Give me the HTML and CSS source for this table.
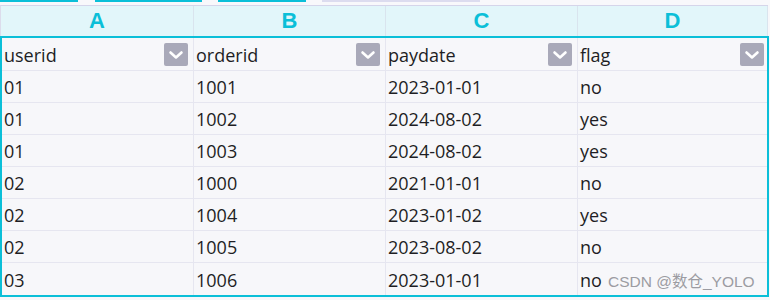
FILE: index.html
```html
<!DOCTYPE html>
<html>
<head>
<meta charset="utf-8">
<link rel="stylesheet" href="styles.css">
</head>
<body>
<div class="page">
  <div class="tabs">
    <span class="tab tab-a"></span>
    <span class="tab tab-b"></span>
    <span class="tab tab-c"></span>
    <span class="tab tab-d"></span>
  </div>
  <div class="colhead">
    <div class="ch ch-a">A</div>
    <div class="ch ch-b">B</div>
    <div class="ch ch-c">C</div>
    <div class="ch ch-d">D</div>
  </div>
  <div class="grid">
    <div class="row row-first">
      <div class="cell c-a"><span>userid</span><span class="dd"><svg viewBox="0 0 24 23" width="24" height="23"><path d="M6.5 9.5 L12 14.5 L17.5 9.5" fill="none" stroke="#fff" stroke-width="2.6" stroke-linecap="round" stroke-linejoin="round"/></svg></span></div>
      <div class="cell c-b"><span>orderid</span><span class="dd"><svg viewBox="0 0 24 23" width="24" height="23"><path d="M6.5 9.5 L12 14.5 L17.5 9.5" fill="none" stroke="#fff" stroke-width="2.6" stroke-linecap="round" stroke-linejoin="round"/></svg></span></div>
      <div class="cell c-c"><span>paydate</span><span class="dd"><svg viewBox="0 0 24 23" width="24" height="23"><path d="M6.5 9.5 L12 14.5 L17.5 9.5" fill="none" stroke="#fff" stroke-width="2.6" stroke-linecap="round" stroke-linejoin="round"/></svg></span></div>
      <div class="cell c-d"><span>flag</span><span class="dd"><svg viewBox="0 0 24 23" width="24" height="23"><path d="M6.5 9.5 L12 14.5 L17.5 9.5" fill="none" stroke="#fff" stroke-width="2.6" stroke-linecap="round" stroke-linejoin="round"/></svg></span></div>
    </div>
    <div class="row"><div class="cell c-a">01</div><div class="cell c-b">1001</div><div class="cell c-c">2023-01-01</div><div class="cell c-d">no</div></div>
    <div class="row"><div class="cell c-a">01</div><div class="cell c-b">1002</div><div class="cell c-c">2024-08-02</div><div class="cell c-d">yes</div></div>
    <div class="row"><div class="cell c-a">01</div><div class="cell c-b">1003</div><div class="cell c-c">2024-08-02</div><div class="cell c-d">yes</div></div>
    <div class="row"><div class="cell c-a">02</div><div class="cell c-b">1000</div><div class="cell c-c">2021-01-01</div><div class="cell c-d">no</div></div>
    <div class="row"><div class="cell c-a">02</div><div class="cell c-b">1004</div><div class="cell c-c">2023-01-02</div><div class="cell c-d">yes</div></div>
    <div class="row"><div class="cell c-a">02</div><div class="cell c-b">1005</div><div class="cell c-c">2023-08-02</div><div class="cell c-d">no</div></div>
    <div class="row row-last"><div class="cell c-a">03</div><div class="cell c-b">1006</div><div class="cell c-c">2023-01-01</div><div class="cell c-d">no</div></div>
  </div>
  <div class="watermark">CSDN @数仓_YOLO</div>
</div>
</body>
</html>
```
FILE: styles.css
```css
html, body {
  margin: 0;
  padding: 0;
  background: #f7f7fa;
}
.page {
  position: relative;
  width: 770px;
  height: 300px;
  overflow: hidden;
  background: #f7f7fa;
}
.tabs {
  display: flex;
  height: 5px;
  background: #f8f8fb;
}
.tab {
  height: 2px;
  background: #0bbfd8;
}
.tab-a { width: 78px; }
.tab-b { width: 107px; margin-left: 17px; }
.tab-c { width: 88px; margin-left: 16px; }
.tab-d { width: 158px; margin-left: 16px; background: #dcdcef; }

.colhead {
  display: flex;
  height: 30px;
  width: 767px;
  border-top: 1px solid #d5d5ea;
  border-left: 1px solid #dcdcec;
  background: #e2f6fa;
}
.ch {
  height: 30px;
  line-height: 30px;
  text-align: center;
  font-family: "Liberation Sans", Arial, sans-serif;
  font-weight: bold;
  font-size: 22px;
  color: #0bbfd8;
  border-right: 1px solid #d9e4ee;
  box-sizing: border-box;
}
.ch-a { width: 193px; }
.ch-b { width: 192px; }
.ch-c { width: 192px; }
.ch-d { width: 190px; }

.grid {
  width: 765px;
  border: 2px solid #0bbfd8;
}
.row {
  display: flex;
  height: 32px;
  box-sizing: border-box;
  border-bottom: 1px solid #e6e6f0;
}
.row-first { height: 33px; }
.row-last { border-bottom: none; }
.cell {
  display: flex;
  align-items: center;
  justify-content: space-between;
  box-sizing: border-box;
  padding-left: 2px;
  font-family: "Open Sans", "Noto Sans", sans-serif;
  font-size: 18px;
  color: #1e1e24;
  border-right: 1px solid #e6e6f0;
}
.cell > span:first-child,
.cell {
  line-height: 29px;
}
.row .cell { padding-top: 2px; }
.row-first .cell { padding-top: 0; }
.row-first .cell > span:first-child { padding-top: 2px; }
.c-a { width: 192px; }
.c-b { width: 192px; }
.c-c { width: 192px; }
.c-d { width: 189px; border-right: none; }

.dd {
  display: block;
  width: 24px;
  height: 23px;
  margin-right: 5px;
  border-radius: 2px;
  background: #a9a9b9;
}
.dd svg { display: block; }
.c-d .dd { margin-right: 3px; }

.watermark {
  position: absolute;
  left: 608px;
  top: 272px;
  font-family: "Liberation Sans", Arial, "Noto Sans CJK SC", sans-serif;
  font-size: 15.5px;
  line-height: 20px;
  color: #9c9ca2;
  white-space: nowrap;
}
```
